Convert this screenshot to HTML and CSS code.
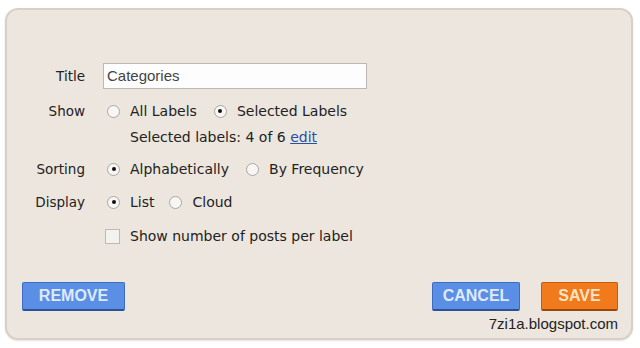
FILE: index.html
```html
<!DOCTYPE html>
<html>
<head>
<meta charset="utf-8">
<link rel="stylesheet" href="styles.css">
</head>
<body>
<div class="panel">
  <div class="form">
    <div class="row row-title">
      <span class="label">Title</span>
      <div class="input">Categories</div>
    </div>
    <div class="row row-show">
      <span class="label">Show</span>
      <div class="opts">
        <span class="radio"></span><span class="opt">All Labels</span>
        <span class="radio on"></span><span class="opt">Selected Labels</span>
      </div>
    </div>
    <div class="row row-sub">
      <span class="label"></span>
      <div class="sub">Selected labels: 4 of 6 <a class="edit">edit</a></div>
    </div>
    <div class="row row-sort">
      <span class="label">Sorting</span>
      <div class="opts">
        <span class="radio on"></span><span class="opt">Alphabetically</span>
        <span class="radio"></span><span class="opt">By Frequency</span>
      </div>
    </div>
    <div class="row row-display">
      <span class="label">Display</span>
      <div class="opts">
        <span class="radio on"></span><span class="opt short">List</span>
        <span class="radio"></span><span class="opt">Cloud</span>
      </div>
    </div>
    <div class="row row-check">
      <span class="label"></span>
      <div class="opts">
        <span class="check"></span><span class="opt">Show number of posts per label</span>
      </div>
    </div>
  </div>
  <div class="actions">
    <button class="btn blue remove">REMOVE</button>
    <div class="right">
      <button class="btn blue cancel">CANCEL</button>
      <button class="btn orange save">SAVE</button>
    </div>
  </div>
  <div class="credit">7zi1a.blogspot.com</div>
</div>
</body>
</html>
```

FILE: styles.css
```css
html, body {
  margin: 0;
  padding: 0;
  background: #ffffff;
}
body {
  padding: 8px 7px 8px 5px;
  font-family: "DejaVu Sans", Verdana, sans-serif;
  color: #222;
}
.panel {
  height: 332px;
  box-sizing: border-box;
  border: 2px solid #d8d0c4;
  border-radius: 13px;
  background: #ece6de;
  box-shadow: 0 1px 2px rgba(0,0,0,0.12);
  display: flex;
  flex-direction: column;
}
.form {
  padding-top: 53px;
  display: flex;
  flex-direction: column;
}
.row {
  display: flex;
  align-items: center;
  height: 20px;
}
.label {
  width: 78px;
  flex: none;
  text-align: right;
  font-size: 13.5px;
  color: #222;
}
.row-title { height: 26px; }
.row-title .label { margin-top: -1px; }
.row-show { margin-top: 12px; }
.row-sub { margin-top: 6px; }
.row-sort { margin-top: 12px; }
.row-display { margin-top: 13px; }
.row-check { margin-top: 14px; }
.input {
  margin-left: 18px;
  width: 264px;
  height: 26px;
  box-sizing: border-box;
  border: 1px solid #bcb8b2;
  background: #fdfdfd;
  font-family: "Liberation Sans", Arial, sans-serif;
  font-size: 15px;
  color: #444;
  padding-left: 3px;
  line-height: 24px;
}
.opts {
  display: flex;
  align-items: center;
  margin-left: 22px;
}
.row-check .opts { margin-left: 20px; }
.opt {
  font-size: 14px;
  color: #222;
  margin-left: 10px;
  margin-right: 17px;
}
.opt.short { margin-right: 15px; }
.radio {
  width: 13px;
  height: 13px;
  box-sizing: border-box;
  border: 1px solid #a9a6a2;
  border-radius: 50%;
  background: #f7f6f4;
  position: relative;
  flex: none;
}
.radio.on::after {
  content: "";
  position: absolute;
  left: 3.5px;
  top: 3.5px;
  width: 4px;
  height: 4px;
  border-radius: 50%;
  background: #111;
}
.check {
  width: 15px;
  height: 15px;
  box-sizing: border-box;
  border: 1px solid #bdbab5;
  background: #f4f2ef;
  flex: none;
}
.sub {
  margin-left: 22px;
  padding-left: 23px;
  font-size: 14px;
  color: #222;
}
.edit {
  color: #2a4fa8;
  text-decoration: underline;
}
.actions {
  margin-top: 36px;
  padding: 0 13px 0 15px;
  display: flex;
  justify-content: space-between;
}
.right {
  display: flex;
  gap: 21px;
}
.btn {
  height: 29px;
  box-sizing: border-box;
  font-family: "Liberation Sans", Arial, sans-serif;
  font-weight: bold;
  font-size: 16px;
  padding: 0;
  border-radius: 2px;
  cursor: pointer;
}
.blue {
  background: #5b8fe6;
  border: 1px solid #3d6cc4;
  border-bottom: 2px solid #2c4f96;
  color: #dfeaf9;
}
.orange {
  background: #f07a1c;
  border: 1px solid #c65c0e;
  border-bottom: 2px solid #9c460a;
  color: #fbe3c6;
}
.remove { width: 103px; }
.cancel { width: 88px; }
.save { width: 77px; }
.credit {
  text-align: right;
  padding-right: 13px;
  margin-top: 4px;
  font-family: "Liberation Sans", Arial, sans-serif;
  font-size: 15px;
  color: #222;
}
```
